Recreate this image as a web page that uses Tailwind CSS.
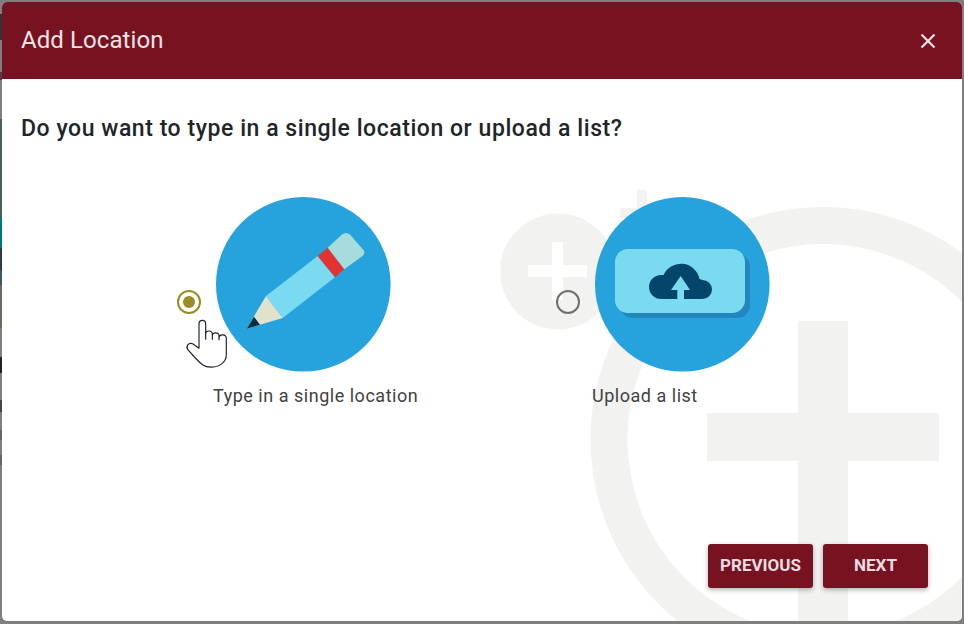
<!DOCTYPE html>
<html lang="en">
<head>
    <meta charset="UTF-8">
    <meta name="viewport" content="width=device-width, initial-scale=1.0">
    <title>Add Location</title>
    <script src="https://cdn.jsdelivr.net/npm/@tailwindcss/browser@4"></script>
</head>
<body class="bg-[#7f7f7f] font-['Roboto',sans-serif] overflow-hidden">

    <div class="relative w-[964px] h-[624px] pl-[2px] pr-[2px] pt-[2px] pb-[3px]">

        <!-- page behind the overlay, only a sliver shows on the left -->
        <div class="absolute left-0 top-0 w-[2px] h-full flex flex-col">
            <div class="h-[14px]"></div>
            <div class="h-[26px] bg-[#333333]"></div>
            <div class="h-[32px]"></div>
            <div class="h-[8px] bg-[#444444]"></div>
            <div class="h-[39px]"></div>
            <div class="h-[99px] bg-[#46605f]"></div>
            <div class="h-[30px] bg-[#007a78]"></div>
            <div class="h-[22px] bg-[#2e3a48]"></div>
            <div class="h-[15px] bg-[#3a5c60]"></div>
            <div class="h-[43px] bg-[#666e62]"></div>
            <div class="h-[29px]"></div>
            <div class="h-[16px] bg-[#222222]"></div>
            <div class="h-[27px]"></div>
            <div class="h-[12px] bg-[#444444]"></div>
            <div class="h-[18px]"></div>
            <div class="h-[10px] bg-[#666666]"></div>
            <div class="h-[15px]"></div>
            <div class="h-[10px] bg-[#666666]"></div>
        </div>

        <div class="relative w-full h-full bg-white rounded-[5px] overflow-hidden flex flex-col">

            <!-- watermark -->
            <svg class="absolute left-0 top-[77px] pointer-events-none" width="960" height="542" viewBox="0 79 960 542">
                <g fill="#f2f2f0">
                    <circle cx="556" cy="271.5" r="58"></circle>
                    <rect x="635" y="190" width="10" height="30"></rect>
                    <rect x="618" y="208" width="30" height="10"></rect>
                    <rect x="796" y="321" width="50" height="300"></rect>
                    <rect x="705" y="413" width="232" height="48"></rect>
                </g>
                <circle cx="821" cy="439.500" r="214" fill="none" stroke="#f2f2f0" stroke-width="37"></circle>
                <g fill="#ffffff">
                    <rect x="550" y="242" width="11" height="58"></rect>
                    <rect x="526" y="265" width="59" height="12"></rect>
                </g>
            </svg>

            <header class="relative h-[77px] shrink-0 bg-[#771321] flex items-center justify-between pl-[19px] pr-[23px] text-[#f1e4e6]">
                <h1 class="text-2xl -mt-[2px] tracking-[0.08px]">Add Location</h1>
                <button class="w-[22px] h-[22px] flex items-center justify-center">
                    <svg width="16" height="16" viewBox="0 0 16 16" fill="none" stroke="#f1e4e6" stroke-width="2.2">
                        <path d="M1.5 1.5l13 13M14.5 1.5l-13 13"></path>
                    </svg>
                </button>
            </header>

            <main class="relative flex-1 flex flex-col pl-[19px] pr-5">
                <p class="mt-[35px] text-[23px] leading-[30px] font-medium text-[#212529] tracking-[0.55px] whitespace-nowrap">Do you want to type in a single location or upload a list?</p>

                <div class="relative mt-[53px] ml-[156px] flex items-start">

                    <!-- single location -->
                    <label class="flex items-start w-[379px]">
                        <span class="mt-[93px] mr-[15px] w-6 h-6 shrink-0 rounded-full border-2 border-[#9b8c25] flex items-center justify-center">
                            <span class="w-3 h-3 rounded-full bg-[#9b8c25]"></span>
                        </span>
                        <span class="flex flex-col">
                            <svg width="175" height="175" viewBox="0 0 175 175">
                                <circle cx="87.3" cy="87.3" r="87.3" fill="#26a3dd"></circle>
                                <path d="M50 99L101.7 59L119 80.3L66.7 121Z" fill="#7adbf0"></path>
                                <path d="M101.7 59L111.7 50.7L128.3 72.3L119 80.3Z" fill="#e23232"></path>
                                <path d="M111.7 50.7L126 37.500Q130 34.500 134 37.500L147 52.500Q150 56 146.500 59L128.300 72.300Z" fill="#a6dcdb"></path>
                                <path d="M50 99L66.700 121L30.700 131.700Z" fill="#e0e2cc"></path>
                                <path d="M38 119.700L44 127.700L30.700 131.700Z" fill="#042f45"></path>
                            </svg>
                            <span class="-ml-[3px] mt-[13px] text-lg leading-[22px] text-[#424242] tracking-[0.52px] whitespace-nowrap">Type in a single location</span>
                        </span>
                    </label>

                    <!-- upload list -->
                    <label class="flex items-start">
                        <span class="mt-[93px] mr-[15px] w-6 h-6 shrink-0 rounded-full border-2 border-[#6f6f6f]"></span>
                        <span class="flex flex-col">
                            <svg width="175" height="175" viewBox="0 0 175 175">
                                <circle cx="87.3" cy="87.3" r="87.3" fill="#26a3dd"></circle>
                                <rect x="25" y="57" width="130" height="64" rx="13" fill="#2287bd"></rect>
                                <rect x="20" y="52" width="130" height="64" rx="13" fill="#7adbf0"></rect>
                                <path d="M66 102A12 12 0 0 1 66 78L68.500 78A19 19 0 0 1 104.500 82L107.500 83A9.500 9.500 0 0 1 107.500 102Z" fill="#03456b"></path>
                                <path d="M85.700 79L76 93L82.300 93L82.300 103L89 103L89 93L95 93Z" fill="#7adbf0"></path>
                            </svg>
                            <span class="-ml-[3px] mt-[13px] text-lg leading-[22px] text-[#424242] tracking-[0.52px] whitespace-nowrap">Upload a list</span>
                        </span>
                    </label>

                    <!-- mouse cursor over the first radio -->
                    <svg class="absolute left-[7px] top-[121px]" width="45" height="52" viewBox="70 415 135 155">
                        <path d="M115 505L115 432C115 418 135 418 135 432L135 478L135 464C135 450 155 450 155 464L155 478L155 468C155 456 175 456 175 468L175 480L175 474C176 462 197 462 197 476L197 525C197 548 175 562 150 562C125 562 115 545 100 530L82 510C74 500 84 486 96 492Z" fill="#ffffff" stroke="#1c2233" stroke-width="3.500" stroke-linejoin="round"></path>
                    </svg>
                </div>

                <div class="mt-auto mb-[33px] mr-[14px] flex justify-end gap-[10px]">
                    <button class="w-[105px] h-[44px] rounded-[3px] bg-[#771321] text-[#ecdde0] text-[17px] font-bold shadow-[0_2px_5px_rgba(0,0,0,0.3)]">PREVIOUS</button>
                    <button class="w-[105px] h-[44px] rounded-[3px] bg-[#771321] text-[#ecdde0] text-[17px] font-bold shadow-[0_2px_5px_rgba(0,0,0,0.3)]">NEXT</button>
                </div>
            </main>
        </div>
    </div>

</body>
</html>
